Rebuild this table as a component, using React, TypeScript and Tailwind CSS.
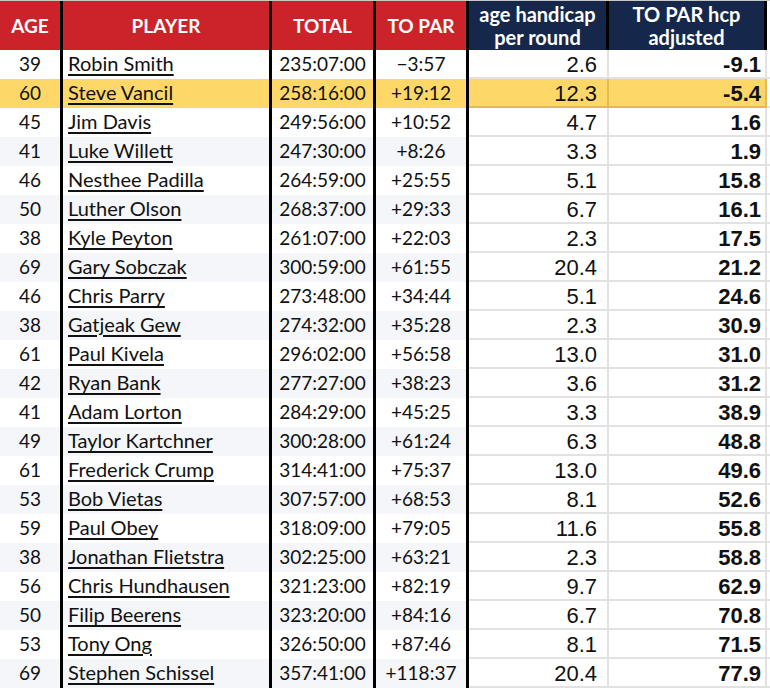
import React from 'react'

type Row = { age: number; name: string; total: string; toPar: string; hcp: string; adj: string };

const rows: Row[] = [
  { age: 39, name: 'Robin Smith', total: '235:07:00', toPar: '\u22123:57', hcp: '2.6', adj: '-9.1' },
  { age: 60, name: 'Steve Vancil', total: '258:16:00', toPar: '+19:12', hcp: '12.3', adj: '-5.4' },
  { age: 45, name: 'Jim Davis', total: '249:56:00', toPar: '+10:52', hcp: '4.7', adj: '1.6' },
  { age: 41, name: 'Luke Willett', total: '247:30:00', toPar: '+8:26', hcp: '3.3', adj: '1.9' },
  { age: 46, name: 'Nesthee Padilla', total: '264:59:00', toPar: '+25:55', hcp: '5.1', adj: '15.8' },
  { age: 50, name: 'Luther Olson', total: '268:37:00', toPar: '+29:33', hcp: '6.7', adj: '16.1' },
  { age: 38, name: 'Kyle Peyton', total: '261:07:00', toPar: '+22:03', hcp: '2.3', adj: '17.5' },
  { age: 69, name: 'Gary Sobczak', total: '300:59:00', toPar: '+61:55', hcp: '20.4', adj: '21.2' },
  { age: 46, name: 'Chris Parry', total: '273:48:00', toPar: '+34:44', hcp: '5.1', adj: '24.6' },
  { age: 38, name: 'Gatjeak Gew', total: '274:32:00', toPar: '+35:28', hcp: '2.3', adj: '30.9' },
  { age: 61, name: 'Paul Kivela', total: '296:02:00', toPar: '+56:58', hcp: '13.0', adj: '31.0' },
  { age: 42, name: 'Ryan Bank', total: '277:27:00', toPar: '+38:23', hcp: '3.6', adj: '31.2' },
  { age: 41, name: 'Adam Lorton', total: '284:29:00', toPar: '+45:25', hcp: '3.3', adj: '38.9' },
  { age: 49, name: 'Taylor Kartchner', total: '300:28:00', toPar: '+61:24', hcp: '6.3', adj: '48.8' },
  { age: 61, name: 'Frederick Crump', total: '314:41:00', toPar: '+75:37', hcp: '13.0', adj: '49.6' },
  { age: 53, name: 'Bob Vietas', total: '307:57:00', toPar: '+68:53', hcp: '8.1', adj: '52.6' },
  { age: 59, name: 'Paul Obey', total: '318:09:00', toPar: '+79:05', hcp: '11.6', adj: '55.8' },
  { age: 38, name: 'Jonathan Flietstra', total: '302:25:00', toPar: '+63:21', hcp: '2.3', adj: '58.8' },
  { age: 56, name: 'Chris Hundhausen', total: '321:23:00', toPar: '+82:19', hcp: '9.7', adj: '62.9' },
  { age: 50, name: 'Filip Beerens', total: '323:20:00', toPar: '+84:16', hcp: '6.7', adj: '70.8' },
  { age: 53, name: 'Tony Ong', total: '326:50:00', toPar: '+87:46', hcp: '8.1', adj: '71.5' },
  { age: 69, name: 'Stephen Schissel', total: '357:41:00', toPar: '+118:37', hcp: '20.4', adj: '77.9' },
];

const cols = 'grid grid-cols-[63px_209px_104px_93px_140px_158px_3px]';

const App = () => {
  return (
    <div className="w-[770px] h-[692px] bg-white overflow-hidden font-['Lato',sans-serif] text-[#111]">
      <div className="h-px bg-[#c8c8c8]" />
      <div className={`${cols} h-[49px] text-white font-bold`}>
        <div className="bg-[#cc2229] border-r-[3px] border-black flex items-center justify-center text-[19px] pt-[2px]">AGE</div>
        <div className="bg-[#cc2229] border-r-[3px] border-black flex items-center justify-center text-[19px] pt-[2px]">PLAYER</div>
        <div className="bg-[#cc2229] border-r-[3px] border-black flex items-center justify-center text-[19px] pt-[2px]">TOTAL</div>
        <div className="bg-[#cc2229] border-r-[3px] border-black flex items-center justify-center text-[19px] pt-[2px]">TO PAR</div>
        <div className="bg-[#15284b] border-r-[3px] border-black flex items-center justify-center text-center text-[20px] leading-[23px]">age handicap<br />per round</div>
        <div className="bg-[#15284b] border-r-[3px] border-black flex items-center justify-center text-center text-[20px] leading-[23px]">TO PAR hcp<br />adjusted</div>
        <div className="bg-white" />
      </div>
      {rows.map((r, i) => {
        const hi = i === 1;
        const bg = hi ? 'bg-[#fdd868]' : i % 2 === 1 ? 'bg-[#f4f6f9]' : 'bg-white';
        const rbg = hi ? 'bg-[#fdd868] border-[#e3bb4e]' : 'bg-white border-[#e2e2e2]';
        return (
          <div key={r.name} className={`${cols} h-[29px] text-[19px] leading-[22px]`}>
            <div className={`${bg} border-r-[3px] border-black flex items-start justify-center pt-[3px]`}>{r.age}</div>
            <div className={`${bg} border-r-[3px] border-black flex items-start pl-[5px] pt-[2px] text-[20px]`}>
              <span className="underline decoration-[2px] underline-offset-[3px]">{r.name}</span>
            </div>
            <div className={`${bg} border-r-[3px] border-black flex items-start justify-center pt-[3px]`}>{r.total}</div>
            <div className={`${bg} border-r-[3px] border-black flex items-start justify-center pt-[3px]`}>{r.toPar}</div>
            <div className={`${rbg} border-b-2 border-r-2 flex items-center justify-end pr-[10px] pt-[2px] font-['Liberation_Sans',Arial,sans-serif] text-[22px]`}>{r.hcp}</div>
            <div className={`${rbg} border-b-2 border-r-2 flex items-center justify-end pr-[4px] pt-[2px] font-['Liberation_Sans',Arial,sans-serif] text-[22px] font-bold`}>{r.adj}</div>
            <div className="bg-white border-b-2 border-[#e2e2e2]" />
          </div>
        );
      })}
    </div>
  );
};

export default App
